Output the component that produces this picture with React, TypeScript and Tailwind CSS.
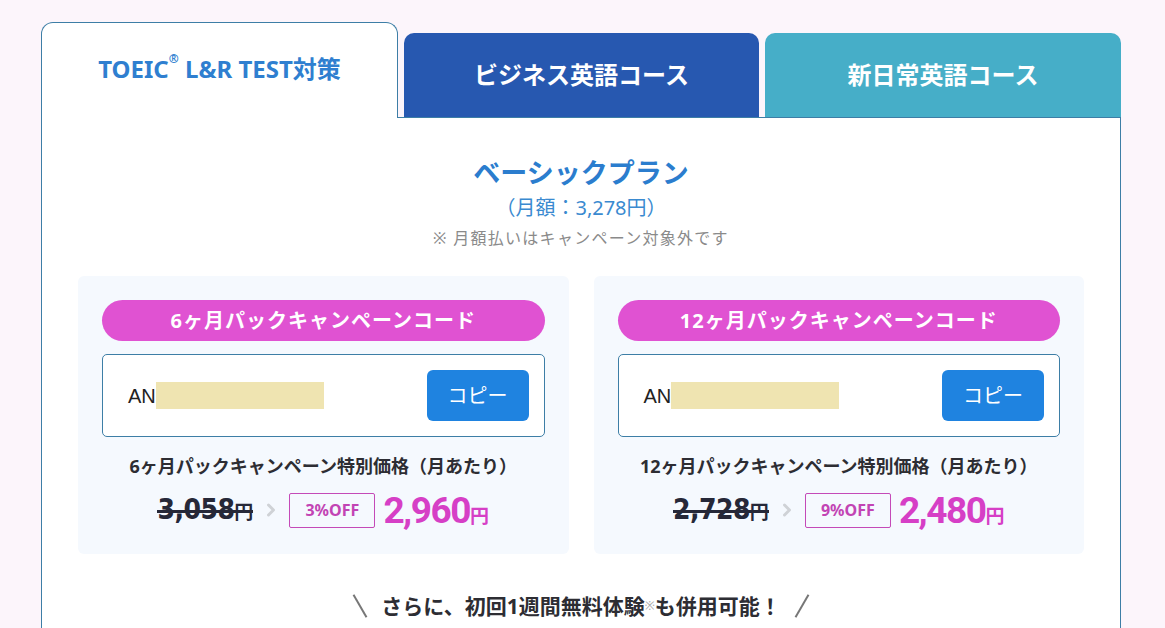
import { ChevronRight } from 'lucide-react';

const JP = { fontFamily: '"Noto Sans", "Noto Sans CJK JP", sans-serif' };
const NUM = { fontFamily: '"DejaVu Sans Condensed", "DejaVu Sans", sans-serif' };
const NUM2 = { fontFamily: 'Roboto, "Noto Sans", sans-serif' };

const PLANS = [
  { months: '6', oldPrice: '3,058', off: '3%OFF', price: '2,960' },
  { months: '12', oldPrice: '2,728', off: '9%OFF', price: '2,480' },
];

// ── Campaign card ─────────────────────────────────────────────
function PlanCard({ months, oldPrice, off, price }: (typeof PLANS)[number]) {
  return (
    <div className="flex-1 bg-[#f5f9fe] rounded-md px-6 pt-6 pb-[25px]">
      <div className="h-[41px] rounded-full bg-[#e052d2] flex items-center justify-center text-white font-bold text-[20px] tracking-[0.05em]">
        {months}ヶ月パックキャンペーンコード
      </div>

      <div className="mt-[13px] h-[83px] bg-white border border-[#3d7ea6] rounded-[5px] flex items-center pl-[25px] pr-[15px]">
        <span className="text-[20px] text-[#222]" style={{ fontFamily: '"Liberation Sans", Arial, sans-serif' }}>AN</span>
        <span className="w-[168px] h-[27px] bg-[#efe4b1]" />
        <button className="ml-auto w-[102px] h-[51px] rounded-[6px] bg-[#1f83e0] text-white text-[20px]">
          コピー
        </button>
      </div>

      <p className="mt-[17px] text-center text-[18px] font-bold text-[#2d2d33] leading-[24px]">
        {months}ヶ月パックキャンペーン特別価格（月あたり）
      </p>

      <div className="mt-[13px] flex items-center justify-center h-[38px]">
        <span className="relative flex items-baseline text-[#262838] font-bold">
          <span className="text-[28px] leading-none tracking-[-0.02em]" style={NUM}>{oldPrice}</span>
          <span className="text-[19px] leading-none">円</span>
          <span className="absolute left-0 right-0 top-1/2 h-[3px] bg-[#262838]" />
        </span>
        <ChevronRight size={20} strokeWidth={3.5} className="ml-[8px] mr-[8px] text-[#cfd2d6]" />
        <span className="h-[35px] w-[86px] border border-[#c44ab8] rounded-[2px] flex items-center justify-center text-[16px] font-bold text-[#c244b4]">
          {off}
        </span>
        <span className="ml-[8px] flex items-baseline font-bold text-[#d63fc6]">
          <span className="text-[37px] leading-none tracking-[-0.04em]" style={NUM2}>{price}</span>
          <span className="text-[19px] leading-none">円</span>
        </span>
      </div>
    </div>
  );
}

export default function App() {
  return (
    <div className="min-h-screen bg-[#fcf5fb] px-[41px] pt-[22px]" style={JP}>
      <div className="w-[1080px]">
        {/* ── Tabs ─────────────────────────────────────────── */}
        <div className="flex items-end gap-[6px]">
          <div className="relative z-10 -mb-px w-[357px] h-[96px] bg-white border border-b-0 border-[#3d7ea6] rounded-t-[12px] flex items-start justify-center pt-[28px]">
            <span className="text-[24px] font-bold text-[#2f7fd0]">
              TOEIC<sup className="text-[12px] align-super">®</sup> L&amp;R TEST対策
            </span>
          </div>
          <div className="w-[355px] h-[84px] bg-[#2758b0] rounded-t-[10px] flex items-center justify-center text-white text-[24px] font-bold">
            ビジネス英語コース
          </div>
          <div className="w-[356px] h-[84px] bg-[#46aec8] rounded-t-[10px] flex items-center justify-center text-white text-[24px] font-bold">
            新日常英語コース
          </div>
        </div>

        {/* ── Panel ────────────────────────────────────────── */}
        <div className="bg-white border border-[#3d7ea6] px-[36px] pt-[37px] pb-10">
          <div className="text-center">
            <h2 className="text-[27px] font-bold text-[#2b7dce] leading-[35px]">ベーシックプラン</h2>
            <p className="mt-[5px] text-[20px] text-[#3a8ad0] leading-[26px]">（月額：3,278円）</p>
            <p className="mt-[6px] text-[16px] text-[#8a8a8a] leading-[22px] tracking-[0.08em]">※ 月額払いはキャンペーン対象外です</p>
          </div>

          <div className="mt-[27px] flex gap-[25px]">
            {PLANS.map(p => (
              <PlanCard key={p.months} {...p} />
            ))}
          </div>

          <div className="mt-[37px] flex items-center justify-center gap-[20px]">
            <span className="w-[2px] h-[26px] bg-[#777] -rotate-[30deg]" />
            <p className="text-[21px] font-bold text-[#2d2d33] leading-[30px]">
              さらに、初回1週間無料体験<span className="text-[12px] text-[#aaa] align-top font-normal">※</span>も併用可能！
            </p>
            <span className="w-[2px] h-[26px] bg-[#777] rotate-[30deg]" />
          </div>
        </div>
      </div>
    </div>
  );
}
